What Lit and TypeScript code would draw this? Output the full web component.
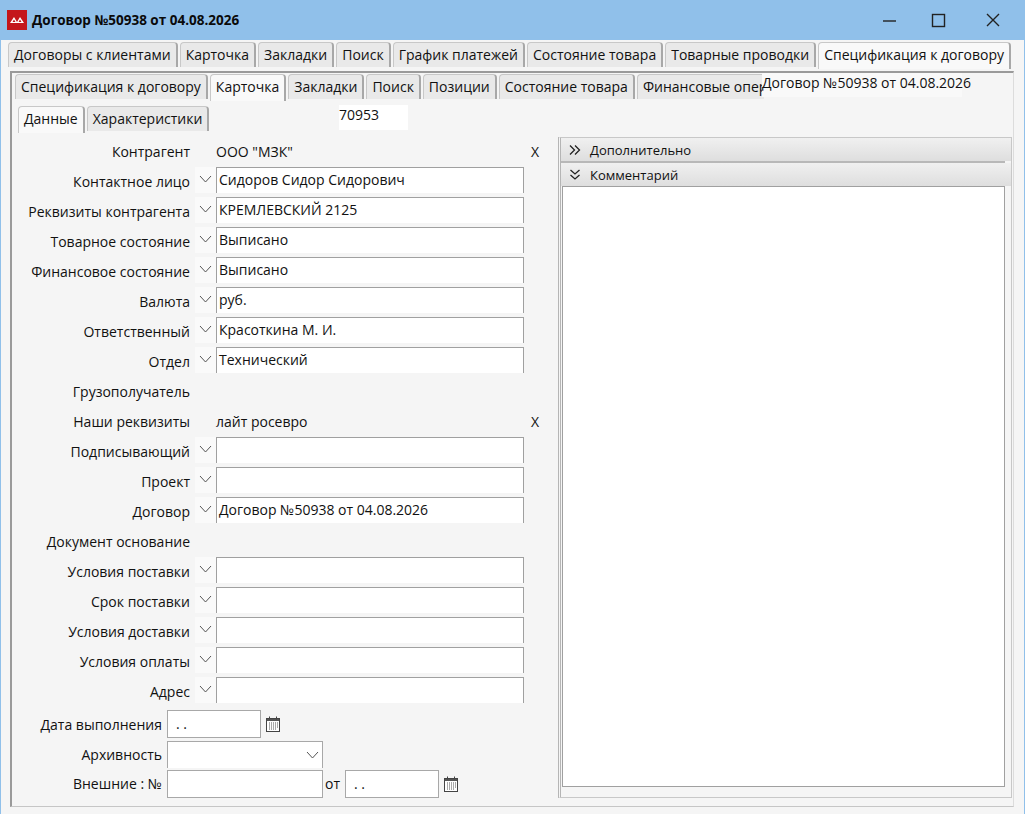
import { LitElement, html, css, svg } from "lit";
import { customElement } from "lit/decorators.js";

const chevron = svg`<path d="M1 1 L6.5 7 L12 1" fill="none" stroke="#555" stroke-width="1"/>`;

type Row = { label: string; kind: "text" | "combo" | "empty"; value?: string; clear?: boolean };
const rows: Row[] = [
  { label: "Контрагент", kind: "text", value: 'ООО "МЗК"', clear: true },
  { label: "Контактное лицо", kind: "combo", value: "Сидоров Сидор Сидорович" },
  { label: "Реквизиты контрагента", kind: "combo", value: "КРЕМЛЕВСКИЙ 2125" },
  { label: "Товарное состояние", kind: "combo", value: "Выписано" },
  { label: "Финансовое состояние", kind: "combo", value: "Выписано" },
  { label: "Валюта", kind: "combo", value: "руб." },
  { label: "Ответственный", kind: "combo", value: "Красоткина М. И." },
  { label: "Отдел", kind: "combo", value: "Технический" },
  { label: "Грузополучатель", kind: "empty" },
  { label: "Наши реквизиты", kind: "text", value: "лайт росевро", clear: true },
  { label: "Подписывающий", kind: "combo", value: "" },
  { label: "Проект", kind: "combo", value: "" },
  { label: "Договор", kind: "combo", value: "Договор №50938 от 04.08.2026" },
  { label: "Документ основание", kind: "empty" },
  { label: "Условия поставки", kind: "combo", value: "" },
  { label: "Срок поставки", kind: "combo", value: "" },
  { label: "Условия доставки", kind: "combo", value: "" },
  { label: "Условия оплаты", kind: "combo", value: "" },
  { label: "Адрес", kind: "combo", value: "" },
];
const outerTabs = ["Договоры с клиентами", "Карточка", "Закладки", "Поиск", "График платежей", "Состояние товара", "Товарные проводки", "Спецификация к договору"];
const innerTabs = ["Спецификация к договору", "Карточка", "Закладки", "Поиск", "Позиции", "Состояние товара", "Финансовые операции"];

@customElement("app-root")
export class AppRoot extends LitElement {
  static styles = css`
    :host { display: block; width: 1025px; height: 814px; overflow: hidden; position: relative; background: #90c0ea; font-family: "Open Sans", "Noto Sans", sans-serif; font-size: 14px; color: #111; }
    * { box-sizing: border-box; }
    .title { height: 40px; display: flex; align-items: center; padding-left: 7px; }
    .logo { width: 20px; height: 20px; background: #c4161c; display: block; }
    .title-text { margin-left: 5px; font-weight: 700; font-size: 13.5px; color: #0a0a0a; }
    .win { margin-left: auto; display: flex; }
    .win svg { display: block; }
    .body { margin: 0 1px; height: 774px; background: #f5f5f5; padding: 2px 0 0 7px; position: relative; }
    .tabs { display: flex; align-items: flex-end; }
    .tab { height: 25px; padding: 0 5px; margin-right: 2px; background: #e9e9e9; border: 1px solid #c8c8c8; border-right: 2px solid #a8a8a8; border-bottom: none; border-radius: 4px 4px 0 0; line-height: 23px; white-space: nowrap; }
    .tab.on { height: 27px; background: #f9f9f9; position: relative; z-index: 1; margin-bottom: -2px; }
    .panel { margin-top: 4px; margin-left: 2px; width: 1004px; height: 736px; border: 1px solid #c6c6c6; border-top: 2px solid #9a9a9a; border-left: 2px solid #9a9a9a; border-right: 1px solid #dcdcdc; padding: 0 0 0 3px; position: relative; }
    .inner-tabs { height: 28px; overflow: hidden; width: 749px; padding-top: 1px; }
    .sub-tabs { margin-top: 5px; margin-left: 3px; }
    .over { position: absolute; left: 750px; top: 0; width: 200px; height: 24px; background: #f9f9f9; line-height: 20px; white-space: nowrap; }
    .num { position: absolute; left: 327px; top: 32px; width: 69px; height: 25px; background: #fff; line-height: 20px; }
    .main { display: flex; margin-top: 6px; }
    .form { width: 533px; }
    .row { display: flex; height: 30px; }
    .lbl { width: 175px; text-align: right; line-height: 30px; white-space: nowrap; }
    .chev { width: 21px; height: 26px; background: #fafafa; margin-left: 5px; }
    .chev svg { display: block; margin: 8px 0 0 4px; }
    .inp { width: 308px; height: 26px; background: #fff; border: 1px solid #a0a0a0; border-bottom: none; padding-left: 2px; line-height: 24px; white-space: nowrap; }
    .val { margin-left: 26px; width: 308px; line-height: 30px; display: flex; justify-content: space-between; }
    .x { margin-right: -15px; }
    .line { display: flex; align-items: center; }
    .line .cap { width: 147px; text-align: right; white-space: nowrap; }
    .box { height: 28px; background: #fff; border: 1px solid #a8a8a8; margin-left: 5px; line-height: 26px; }
    .date { width: 94px; padding-left: 8px; letter-spacing: 0; }
    .wide { width: 156px; }
    .arch { height: 27px; border-bottom: none; position: relative; }
    .arch svg { position: absolute; right: 3px; top: 9px; }
    .cal { margin-left: 5px; display: block; }
    .l1 { margin-top: 1px; height: 32px; }
    .l2 { height: 29px; }
    .l3 { height: 29px; }
    .side { margin-left: 10px; width: 454px; height: 661px; border: 1px solid #c8c8c8; border-left: 3px double #b5b5b5; padding: 0; }
    .sec { height: 23px; display: flex; align-items: center; padding-left: 8px; gap: 9px; background: linear-gradient(#f0f0f0, #dedede); font-size: 13px; }
    .sep { height: 2px; background: #b8b8b8; margin-right: 6px; }
    .note { height: 601px; margin: 0 6px 0 1px; background: #fff; border: 1px solid #a0a0a0; }
  `;

  cal() {
    return html`<svg class="cal" width="14" height="16" viewBox="0 0 14 16"><rect x="0.5" y="2.5" width="13" height="13" fill="#fff" stroke="#444"/><rect x="1" y="3" width="12" height="2" fill="#555"/><path d="M3.5 0.5v3M10.5 0.5v3" stroke="#444"/><path d="M3 7h1M5 7h1M7 7h1M9 7h1M11 7h1M3 9h1M5 9h1M7 9h1M9 9h1M11 9h1M3 11h1M5 11h1M7 11h1M9 11h1M11 11h1M3 13h1M5 13h1M7 13h1M9 13h1" stroke="#555"/></svg>`;
  }

  renderRow(r: Row) {
    if (r.kind === "combo") {
      return html`<div class="row"><div class="lbl">${r.label}</div><div class="chev"><svg width="13" height="8" viewBox="0 0 13 8">${chevron}</svg></div><div class="inp">${r.value}</div></div>`;
    }
    return html`<div class="row"><div class="lbl">${r.label}</div>${r.kind === "text" ? html`<div class="val"><span>${r.value}</span><span class="x">X</span></div>` : ""}</div>`;
  }

  render() {
    return html`
      <div class="title">
        <svg class="logo" viewBox="0 0 20 20"><path d="M3 13 L7 7 L10 12 L13 7 L17 13 Z" fill="#fff"/><path d="M5.5 12 L7 9.5 L8.5 12 ZM11.5 12 L13 9.5 L14.5 12 Z" fill="#c4161c"/></svg>
        <span class="title-text">Договор №50938 от 04.08.2026</span>
        <div class="win">
          <svg width="46" height="40"><path d="M8 21h13" stroke="#222" stroke-width="1.4"/></svg>
          <svg width="58" height="40"><rect x="11.5" y="14.5" width="12" height="12" fill="none" stroke="#222" stroke-width="1.4"/></svg>
          <svg width="46" height="40"><path d="M8 14 L20 26 M20 14 L8 26" stroke="#222" stroke-width="1.4"/></svg>
        </div>
      </div>
      <div class="body">
        <div class="tabs">${outerTabs.map((t, i) => html`<div class="tab ${i === 7 ? "on" : ""}">${t}</div>`)}</div>
        <div class="panel">
          <div class="over">Договор №50938 от 04.08.2026</div>
          <div class="num">70953</div>
          <div class="inner-tabs"><div class="tabs">${innerTabs.map((t, i) => html`<div class="tab ${i === 1 ? "on" : ""}">${t}</div>`)}</div></div>
          <div class="tabs sub-tabs"><div class="tab on">Данные</div><div class="tab">Характеристики</div></div>
          <div class="main">
            <div class="form">
              ${rows.map((r) => this.renderRow(r))}
              <div class="line l1"><div class="cap">Дата выполнения</div><div class="box date">. .</div>${this.cal()}</div>
              <div class="line l2"><div class="cap">Архивность</div><div class="box wide arch"><svg width="13" height="8" viewBox="0 0 13 8">${chevron}</svg></div></div>
              <div class="line l3"><div class="cap">Внешние : №</div><div class="box wide"></div><span style="margin-left:2px">от</span><div class="box date">. .</div>${this.cal()}</div>
            </div>
            <div class="side">
              <div class="sec"><svg width="12" height="10" viewBox="0 0 12 10"><path d="M1 0.5 L5.5 5 L1 9.5 M6 0.5 L10.5 5 L6 9.5" fill="none" stroke="#222" stroke-width="1.3"/></svg>Дополнительно</div>
              <div class="sep"></div>
              <div class="sec"><svg width="12" height="11" viewBox="0 0 12 11"><path d="M1.5 1 L6 5 L10.5 1 M1.5 6 L6 10 L10.5 6" fill="none" stroke="#222" stroke-width="1.3"/></svg>Комментарий</div>
              <div class="note"></div>
            </div>
          </div>
        </div>
      </div>
    `;
  }
}
